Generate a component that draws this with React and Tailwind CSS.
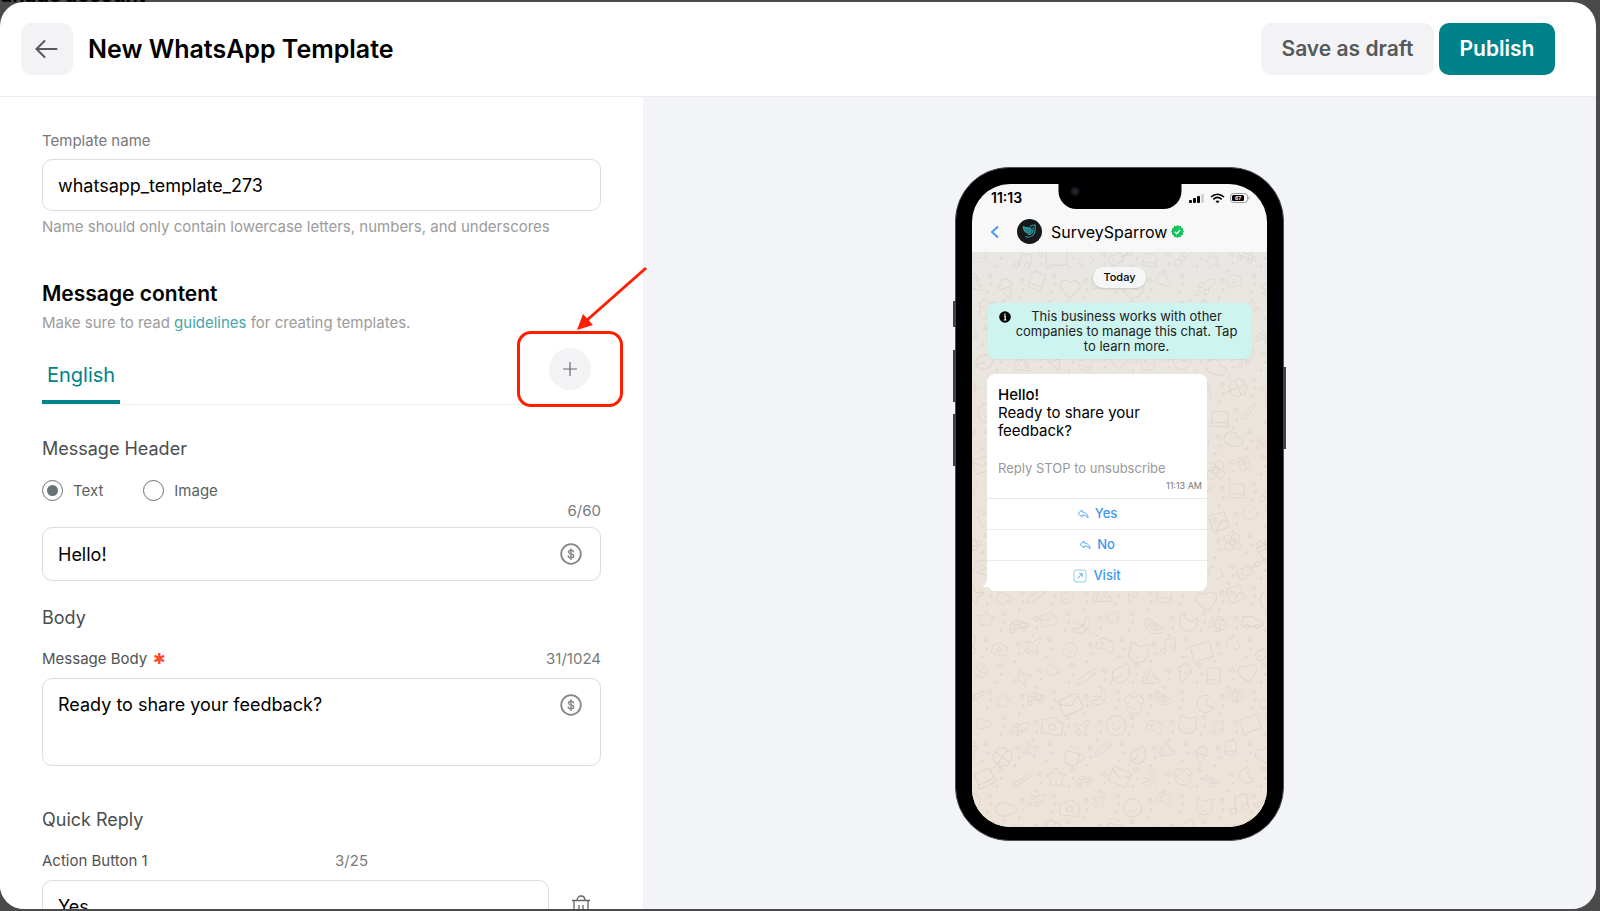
import {
  Plane, Cat, Dog, Star, Heart, Camera, Music, Pizza, Coffee, Car, Smile, Book, Leaf, Moon,
  Cloud, Gift, Laptop, Mail, Flower, Fish, Rocket, Brush, Clock, Image, Sparkle, Pencil, Gamepad2,
  MessageSquare, Banana, Guitar, IceCreamCone, Turtle, Clover, Citrus, Code,
} from "lucide-react";

const inputClass =
  "block w-full rounded-[10px] border border-[#dcdcdc] bg-white px-[15px] text-lg text-black outline-none";

const doodles = [
  Cat, Flower, Plane, Moon, Cloud, Banana, Heart, Star, Pizza, Guitar, Coffee, Music, Gift, Smile, Fish,
  Rocket, Dog, Image, Turtle, IceCreamCone, Laptop, Pencil, MessageSquare, Clover, Gamepad2, Car, Camera,
  Citrus, Clock, Mail, Book, Brush, Leaf, Code, Sparkle,
];

const ChatWallpaper = () => {
  const cells = Array.from({ length: 230 }, (_, i) => ({ col: i % 10, row: Math.floor(i / 10), i }));

  return (
    <svg
      aria-hidden="true"
      className="absolute inset-0 size-full text-[#8a7f74] opacity-13"
      viewBox="0 0 295 576"
      preserveAspectRatio="xMidYMid slice"
    >
      {cells.map(({ col, row, i }) => {
        const Icon = doodles[(i * 11 + row * 3) % doodles.length];
        const x = col * 33 - (row % 2) * 16 + ((i * 7) % 8);
        const y = row * 26 + ((i * 5) % 10) - 6;
        const size = 17 + ((i * 13) % 9);
        return (
          <g key={i}>
            <g transform={`translate(${x} ${y}) rotate(${((i * 37) % 50) - 25} 12 12)`}>
              <Icon width={size} height={size} strokeWidth={1} />
            </g>
            <circle cx={x + 28} cy={y + 4} r="2" fill="none" stroke="currentColor" />
            <circle cx={x + 25} cy={y + 21} r="1" fill="none" stroke="currentColor" />
            <circle cx={x + 29} cy={y + 13} r="1" fill="none" stroke="currentColor" />
          </g>
        );
      })}
    </svg>
  );
};

const DollarIcon = () => (
  <svg viewBox="0 0 24 24" className="size-6" fill="none" stroke="#868686">
    <circle cx="12" cy="12" r="9.8" strokeWidth="1.8" />
    <path
      d="M14.6 9.8c-.2-1-1.2-1.6-2.6-1.6s-2.5.7-2.5 1.8c0 2.7 5.2 1.2 5.2 4 0 1.1-1.2 1.8-2.7 1.8s-2.6-.7-2.8-1.8M12 6.6v10.8"
      strokeWidth="1.4"
      strokeLinecap="round"
    />
  </svg>
);

const TrashIcon = () => (
  <svg viewBox="0 0 24 24" className="size-6" fill="none" stroke="#666" strokeWidth="1.3">
    <path d="M3 6.5h18M5 6.5V22h14V6.5M8 6.5C8 .5 16 .5 16 6.5M10 11v7M14 11v7" />
  </svg>
);

const ReplyIcon = () => (
  <svg viewBox="0 0 12 10" className="h-[10px] w-3" fill="none" stroke="#4a9ff0" strokeLinejoin="round">
    <path d="M5 1 1 4.5 5 8V6c3-.2 5 .8 6 3C11 5.500 9 3.200 5 3Z" strokeWidth=".9" />
  </svg>
);

const VisitIcon = () => (
  <svg viewBox="0 0 14 14" className="size-[14px]" fill="none">
    <rect x="1" y="1" width="12" height="12" rx="2" stroke="#8fd0dc" />
    <path d="M4.5 9.5 9 5M6 4.7h3.300V8" stroke="#4a9ff0" strokeWidth=".9" />
  </svg>
);

const Counter = ({ children }) => <span className="text-[15px] leading-5 text-[#7a7a7a]">{children}</span>;

const Header = () => (
  <header className="flex h-[95px] shrink-0 items-center justify-between border-b border-[#ececec] pr-[41px] pl-[21px]">
    <div className="flex items-center gap-[15px]">
      <button
        type="button"
        aria-label="Back"
        className="flex size-[52px] items-center justify-center rounded-[10px] bg-[#f3f3f5] text-[#55595b]"
      >
        <svg viewBox="0 0 24 20" className="h-5 w-6" fill="none" stroke="currentColor" strokeWidth="2">
          <path d="M9.5 2 1.500 10l8 8M1.500 10h20" strokeLinecap="round" />
        </svg>
      </button>
      <h1 className="pt-0.5 text-[25px] font-semibold text-black">New WhatsApp Template</h1>
    </div>
    <div className="flex gap-[5px]">
      <button
        type="button"
        className="h-[52px] w-[173px] rounded-[10px] bg-[#f3f3f5] text-[21px] font-semibold text-[#55595b]"
      >
        Save as draft
      </button>
      <button type="button" className="h-[52px] w-[116px] rounded-[10px] bg-[#00828a] text-[21px] font-semibold text-white">
        Publish
      </button>
    </div>
  </header>
);

const AddLanguage = () => (
  <div className="relative mt-[15px] mr-[10px] self-start">
    <button
      type="button"
      aria-label="Add language"
      className="flex size-[42px] items-center justify-center rounded-full bg-[#f3f3f5]"
    >
      <svg viewBox="0 0 14 14" className="size-[14px]" stroke="#666b6d" strokeWidth="1.2">
        <path d="M7 0v14M0 7h14" />
      </svg>
    </button>
    <div className="pointer-events-none absolute -inset-x-8 -inset-y-[17px] rounded-[14px] border-[3px] border-[#ff1e00]" />
    <svg
      viewBox="0 0 72 66"
      aria-hidden="true"
      className="pointer-events-none absolute bottom-[58px] left-7 h-[66px] w-[72px]"
    >
      <path d="M69 2 9 55" stroke="#ff1e00" strokeWidth="3" />
      <path d="M0 64 6 48l10 11Z" fill="#ff1e00" />
    </svg>
  </div>
);

const Radio = ({ label, ...props }) => (
  <label className="flex items-center gap-[10px] text-[15px] leading-5 text-[#5c5f60]">
    <input
      type="radio"
      name="header-type"
      className="size-[21px] appearance-none rounded-full border border-[#6c7072] bg-white bg-clip-content p-1 checked:bg-[#667375]"
      {...props}
    />
    {label}
  </label>
);

const TemplateForm = () => (
  <form className="relative z-10 min-h-0 bg-white px-[42px] pt-[34px]">
    <label htmlFor="name" className="block text-[15px] leading-5 text-[#777]">
      Template name
    </label>
    <input id="name" defaultValue="whatsapp_template_273" className={`${inputClass} mt-2 h-[52px]`} />
    <p className="mt-1.5 text-[15px] leading-5 text-[#9b9b9b]">
      Name should only contain lowercase letters, numbers, and underscores
    </p>

    <h2 className="mt-[43px] text-[21px] leading-7 font-semibold text-black">Message content</h2>
    <p className="mt-[5px] text-[15px] leading-5 text-[#9b9b9b]">
      Make sure to read{" "}
      <a href="#guidelines" className="text-[#45a5ab]">
        guidelines
      </a>{" "}
      for creating templates.
    </p>

    <div className="flex items-end justify-between border-b border-[#f0f0f0]">
      <button type="button" className="mt-7 border-b-4 border-[#00828a] px-[5px] pb-[11px] text-xl leading-7 text-[#00828a]">
        English
      </button>
      <AddLanguage />
    </div>

    <h3 className="mt-8 text-lg leading-6 text-[#4a4d4e]">Message Header</h3>
    <div className="mt-[19px] flex gap-10">
      <Radio label="Text" defaultChecked />
      <Radio label="Image" />
    </div>
    <div className="flex justify-end">
      <Counter>6/60</Counter>
    </div>
    <div className="relative mt-1.5">
      <input aria-label="Message header" defaultValue="Hello!" className={`${inputClass} h-[54px]`} />
      <button type="button" aria-label="Insert variable" className="absolute top-[15px] right-[18px]">
        <DollarIcon />
      </button>
    </div>

    <h3 className="mt-[25px] text-lg leading-6 text-[#4a4d4e]">Body</h3>
    <div className="mt-[19px] flex justify-between">
      <label htmlFor="body" className="flex gap-1.5 text-[15px] leading-5 text-[#4f5253]">
        Message Body <span className="text-[#ff4b2b]">✱</span>
      </label>
      <Counter>31/1024</Counter>
    </div>
    <div className="relative mt-[9px]">
      <textarea
        id="body"
        defaultValue="Ready to share your feedback?"
        className={`${inputClass} h-[88px] resize-none py-3`}
      />
      <button type="button" aria-label="Insert variable" className="absolute top-[15px] right-[18px]">
        <DollarIcon />
      </button>
    </div>

    <h3 className="mt-[42px] text-lg leading-6 text-[#4a4d4e]">Quick Reply</h3>
    <div className="mt-[19px] flex w-[326px] justify-between">
      <label htmlFor="action" className="text-[15px] leading-5 text-[#4f5253]">
        Action Button 1
      </label>
      <Counter>3/25</Counter>
    </div>
    <div className="mt-[9px] flex items-center gap-5">
      <input id="action" defaultValue="Yes" className={`${inputClass} h-[52px]`} />
      <button type="button" aria-label="Delete action" className="mr-2 shrink-0">
        <TrashIcon />
      </button>
    </div>
  </form>
);

const StatusBar = () => (
  <div className="flex h-[27px] items-center justify-between pr-[17px] pl-[19px] text-black">
    <span className="text-sm font-semibold">11:13</span>
    <svg viewBox="0 0 62 12" className="h-3 w-[62px]">
      <rect x="1" y="8" width="3" height="3" rx="1" />
      <rect x="5" y="6" width="3" height="5" rx="1" />
      <rect x="9" y="4" width="3" height="7" rx="1" />
      <rect x="13" y="2" width="3" height="9" rx="1" fill="#d4d4d4" />
      <g fill="none" stroke="black" strokeWidth="1.6">
        <path d="M23 5c4-3.600 9-3.600 13 0M25.300 7.400c2.600-2.400 5.800-2.400 8.400 0" />
      </g>
      <path d="m27.500 9.300 2 2 2-2c-1.200-1-2.800-1-4 0Z" />
      <rect x="42.5" y="1.5" width="17" height="9" rx="3" fill="none" stroke="#9a9a9a" />
      <rect x="44" y="3" width="12" height="6" rx="1.5" />
      <path d="M61 4.500v3" stroke="#9a9a9a" />
      <text x="50" y="8" fontSize="5" fontWeight="700" textAnchor="middle" fill="white">
        67
      </text>
    </svg>
  </div>
);

const ContactBar = () => (
  <div className="flex h-[41px] items-center pl-[18px]">
    <svg viewBox="0 0 10 14" className="h-[14px] w-[10px]" fill="none" stroke="#4a9bf5" strokeWidth="2">
      <path d="M8 1.500 2 7l6 5.500" />
    </svg>
    <svg viewBox="0 0 24 24" className="ml-[17px] size-[25px]">
      <circle cx="12" cy="12" r="12" fill="#16191c" />
      <g fill="none" stroke="#35a3ab" strokeLinecap="round" strokeLinejoin="round">
        <path d="M6 7.500c3 1.800 5.500.2 7 1.500 1.400 1.400.6 4.200-1.500 4.600C8.500 14 6.300 11 6 7.500Z" fill="#2a8188" />
        <path d="M13 7c1.500-1.500 3-1.500 4.500-1.200-.4 3 .6 5.400-1 8.200-1.600 2.800-5 4-8 3M15.500 8.500c.3 3.500-1 6-4.500 6.700" />
      </g>
    </svg>
    <span className="ml-[9px] text-base text-black">SurveySparrow</span>
    <svg viewBox="0 0 24 24" className="ml-1 size-[13px]">
      <path
        fill="#12c35b"
        d="m12 0 2.600 2.300L18 1.600l1.100 3.300 3.300 1.100-.7 3.400L24 12l-2.300 2.600.7 3.400-3.300 1.100-1.100 3.300-3.400-.7L12 24l-2.600-2.300-3.400.7-1.100-3.300L1.600 18l.7-3.400L0 12l2.300-2.600L1.600 6l3.300-1.100L6 1.600l3.400.7Z"
      />
      <path d="m7 12.500 3.500 3.500L17 9" fill="none" stroke="white" strokeWidth="2.6" />
    </svg>
  </div>
);

const ReplyButton = ({ icon, children }) => (
  <button
    type="button"
    className="flex h-[31px] w-full items-center justify-center gap-1.5 border-t border-[#e9e9e9] text-[13px] font-medium text-[#3c97ee]"
  >
    {icon}
    {children}
  </button>
);

const MessageBubble = () => (
  <div className="relative mt-[15px] ml-[15px] w-[220px] rounded-lg bg-white">
    <svg viewBox="0 0 10 8" aria-hidden="true" className="absolute bottom-0.5 -left-[5px] h-2 w-[10px]">
      <path d="M5 0C4 3 2 5 0 6h10V0Z" fill="white" />
    </svg>
    <div className="pt-3 pr-[5px] pb-1.5 pl-[11px]">
      <p className="text-[15px] leading-[18px] font-medium text-black">Hello!</p>
      <p className="text-[15px] leading-[18px] text-black">Ready to share your feedback?</p>
      <p className="mt-[19px] text-[13px] leading-[18px] text-[#999]">Reply STOP to unsubscribe</p>
      <p className="mt-[3px] text-right text-[9px] leading-3 text-[#777]">11:13 AM</p>
    </div>
    <ReplyButton icon={<ReplyIcon />}>Yes</ReplyButton>
    <ReplyButton icon={<ReplyIcon />}>No</ReplyButton>
    <ReplyButton icon={<VisitIcon />}>Visit</ReplyButton>
  </div>
);

const PhonePreview = () => (
  <div className="relative w-[329px] rounded-[54px] border border-[#4b4e52] bg-black px-4 pt-4 pb-[13px]">
    {/* side keys */}
    <div className="absolute top-[133px] -left-[3px] h-[26px] w-[3px] bg-[#3f4245]" />
    <div className="absolute top-[182px] -left-[3px] h-[52px] w-[3px] bg-[#3f4245]" />
    <div className="absolute top-[246px] -left-[3px] h-[52px] w-[3px] bg-[#3f4245]" />
    <div className="absolute top-[199px] -right-[3px] h-[82px] w-[3px] bg-[#3f4245]" />

    <div className="flex h-[643px] flex-col overflow-hidden rounded-[38px] bg-[#f8f8f8]">
      <StatusBar />
      <ContactBar />
      <div className="relative flex-1 bg-linear-to-b from-[#e8e7e3] to-[#ece3da] to-40%">
        <ChatWallpaper />
        <div className="relative">
          <div className="flex justify-center pt-[15px]">
            <span className="rounded-full bg-[#f6f6f6] px-[10px] text-[11px] leading-[21px] font-medium text-black shadow-sm">
              Today
            </span>
          </div>
          <div className="mx-[15px] mt-[15px] flex rounded-lg bg-[#cdf4ef] pt-1.5 pr-[10px] pb-[5px] pl-3 text-[#222] shadow-xs">
            <svg viewBox="0 0 12 12" className="mt-0.5 size-3 shrink-0">
              <circle cx="6" cy="6" r="5.8" fill="black" />
              <path d="M6 2.500V4M5 5.200h1.200V9M4.700 9h2.700" stroke="white" strokeWidth="1.2" />
            </svg>
            <p className="text-center text-[13px] leading-[15px]">
              This business works with other companies to manage this chat. Tap to learn more.
            </p>
          </div>
          <MessageBubble />
        </div>
      </div>
    </div>

    <div className="absolute top-[15px] left-1/2 flex h-[26px] w-[123px] -translate-x-1/2 rounded-b-[18px] bg-black pl-3">
      <span className="mt-1 size-[9px] rounded-full border-2 border-[#14161b] bg-[#22252d]" />
    </div>
  </div>
);

const App = () => (
  <div className="relative h-screen overflow-hidden bg-[#4a4a4a] py-0.5 pr-1 font-['Inter',sans-serif]">
    <p className="absolute -top-[17px] -left-[18px] text-xl leading-6 font-bold text-black">Manage account</p>
    <main className="relative flex h-full flex-col overflow-hidden rounded-[24px] bg-white">
      <Header />
      <div className="grid min-h-0 flex-1 grid-cols-[643fr_953fr]">
        <TemplateForm />
        <section aria-label="Preview" className="flex items-start justify-center bg-[#f3f4f8] pt-[70px]">
          <PhonePreview />
        </section>
      </div>
    </main>
  </div>
);

export default App;
